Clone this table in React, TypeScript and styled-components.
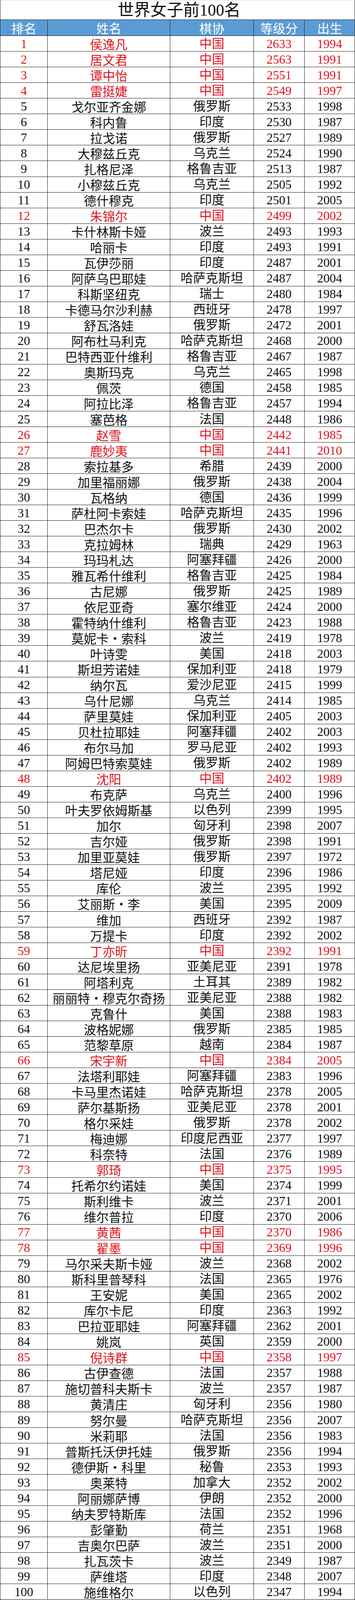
import React from 'react'
import styled, { createGlobalStyle } from 'styled-components'

const GlobalStyle = createGlobalStyle`
  html, body {
    margin: 0;
    padding: 0;
    background: #ffffff;
  }
  body {
    font-family: 'Liberation Serif', 'Noto Sans CJK SC', serif;
  }
`

type Player = [string, string, number, number]

const players: Player[] = [
  ['侯逸凡', '中国', 2633, 1994],
  ['居文君', '中国', 2563, 1991],
  ['谭中怡', '中国', 2551, 1991],
  ['雷挺婕', '中国', 2549, 1997],
  ['戈尔亚齐金娜', '俄罗斯', 2533, 1998],
  ['科内鲁', '印度', 2530, 1987],
  ['拉戈诺', '俄罗斯', 2527, 1989],
  ['大穆兹丘克', '乌克兰', 2524, 1990],
  ['扎格尼泽', '格鲁吉亚', 2513, 1987],
  ['小穆兹丘克', '乌克兰', 2505, 1992],
  ['德什穆克', '印度', 2501, 2005],
  ['朱锦尔', '中国', 2499, 2002],
  ['卡什林斯卡娅', '波兰', 2493, 1993],
  ['哈丽卡', '印度', 2493, 1991],
  ['瓦伊莎丽', '印度', 2487, 2001],
  ['阿萨乌巴耶娃', '哈萨克斯坦', 2487, 2004],
  ['科斯坚纽克', '瑞士', 2480, 1984],
  ['卡德马尔沙利赫', '西班牙', 2478, 1997],
  ['舒瓦洛娃', '俄罗斯', 2472, 2001],
  ['阿布杜马利克', '哈萨克斯坦', 2468, 2000],
  ['巴特西亚什维利', '格鲁吉亚', 2467, 1987],
  ['奥斯玛克', '乌克兰', 2465, 1998],
  ['佩茨', '德国', 2458, 1985],
  ['阿拉比泽', '格鲁吉亚', 2457, 1994],
  ['塞芭格', '法国', 2448, 1986],
  ['赵雪', '中国', 2442, 1985],
  ['鹿妙夷', '中国', 2441, 2010],
  ['索拉基多', '希腊', 2439, 2000],
  ['加里福丽娜', '俄罗斯', 2438, 2004],
  ['瓦格纳', '德国', 2436, 1999],
  ['萨杜阿卡索娃', '哈萨克斯坦', 2435, 1996],
  ['巴杰尔卡', '俄罗斯', 2430, 2002],
  ['克拉姆林', '瑞典', 2429, 1963],
  ['玛玛札达', '阿塞拜疆', 2426, 2000],
  ['雅瓦希什维利', '格鲁吉亚', 2425, 1984],
  ['古尼娜', '俄罗斯', 2425, 1989],
  ['依尼亚奇', '塞尔维亚', 2424, 2000],
  ['霍特纳什维利', '格鲁吉亚', 2423, 1988],
  ['莫妮卡·索科', '波兰', 2419, 1978],
  ['叶诗雯', '美国', 2418, 2003],
  ['斯坦芳诺娃', '保加利亚', 2418, 1979],
  ['纳尔瓦', '爱沙尼亚', 2415, 1999],
  ['乌什尼娜', '乌克兰', 2414, 1985],
  ['萨里莫娃', '保加利亚', 2405, 2003],
  ['贝杜拉耶娃', '阿塞拜疆', 2402, 2003],
  ['布尔马加', '罗马尼亚', 2402, 1993],
  ['阿姆巴特索莫娃', '俄罗斯', 2402, 1989],
  ['沈阳', '中国', 2402, 1989],
  ['布克萨', '乌克兰', 2400, 1996],
  ['叶夫罗依姆斯基', '以色列', 2399, 1995],
  ['加尔', '匈牙利', 2398, 2007],
  ['吉尔娅', '俄罗斯', 2398, 1991],
  ['加里亚莫娃', '俄罗斯', 2397, 1972],
  ['塔尼娅', '印度', 2396, 1986],
  ['库伦', '波兰', 2395, 1992],
  ['艾丽斯·李', '美国', 2395, 2009],
  ['维加', '西班牙', 2392, 1987],
  ['万提卡', '印度', 2392, 2002],
  ['丁亦昕', '中国', 2392, 1991],
  ['达尼埃里扬', '亚美尼亚', 2391, 1978],
  ['阿塔利克', '土耳其', 2389, 1982],
  ['丽丽特·穆克尔奇扬', '亚美尼亚', 2388, 1982],
  ['克鲁什', '美国', 2388, 1983],
  ['波格妮娜', '俄罗斯', 2385, 1985],
  ['范黎草原', '越南', 2384, 1987],
  ['宋宇新', '中国', 2384, 2005],
  ['法塔利耶娃', '阿塞拜疆', 2383, 1996],
  ['卡马里杰诺娃', '哈萨克斯坦', 2378, 2005],
  ['萨尔基斯扬', '亚美尼亚', 2378, 2001],
  ['格尔采娃', '俄罗斯', 2378, 2002],
  ['梅迪娜', '印度尼西亚', 2377, 1997],
  ['科奈特', '法国', 2376, 1989],
  ['郭琦', '中国', 2375, 1995],
  ['托希尔约诺娃', '美国', 2374, 1999],
  ['斯利维卡', '波兰', 2371, 2001],
  ['维尔普拉', '印度', 2370, 2006],
  ['黄茜', '中国', 2370, 1986],
  ['翟墨', '中国', 2369, 1996],
  ['马尔采夫斯卡娅', '波兰', 2368, 2002],
  ['斯科里普琴科', '法国', 2365, 1976],
  ['王安妮', '美国', 2365, 2002],
  ['库尔卡尼', '印度', 2363, 1992],
  ['巴拉亚耶娃', '阿塞拜疆', 2362, 2001],
  ['姚岚', '英国', 2359, 2000],
  ['倪诗群', '中国', 2358, 1997],
  ['古伊查德', '法国', 2357, 1988],
  ['施切普科夫斯卡', '波兰', 2357, 1987],
  ['黄清庄', '匈牙利', 2356, 1980],
  ['努尔曼', '哈萨克斯坦', 2356, 2007],
  ['米莉耶', '法国', 2356, 1983],
  ['普斯托沃伊托娃', '俄罗斯', 2356, 1994],
  ['德伊斯·科里', '秘鲁', 2353, 1993],
  ['奥莱特', '加拿大', 2352, 2002],
  ['阿丽娜萨博', '伊朗', 2352, 2000],
  ['纳夫罗特斯库', '法国', 2352, 1996],
  ['彭肇勤', '荷兰', 2351, 1968],
  ['吉奥尔巴萨', '波兰', 2351, 2000],
  ['扎瓦茨卡', '波兰', 2349, 1987],
  ['萨维塔', '印度', 2348, 2007],
  ['施维格尔', '以色列', 2347, 1994],
]

function App() {
  return (
    <>
      <GlobalStyle />
      <Sheet>
        <Title>世界女子前100名</Title>
        <HeadRow>
          <HeadCell>排名</HeadCell>
          <HeadCell>姓名</HeadCell>
          <HeadCell>棋协</HeadCell>
          <HeadCell>等级分</HeadCell>
          <HeadCell>出生</HeadCell>
        </HeadRow>
        {players.map(([name, fed, rating, born], i) => {
          const red = fed === '中国'
          return (
            <Row key={i}>
              <Cell $red={red}>{i + 1}</Cell>
              <NameCell $red={red}>{name}</NameCell>
              <Cell $red={red}>{fed}</Cell>
              <Cell $red={red}>{rating}</Cell>
              <Cell $red={red}>{born}</Cell>
            </Row>
          )
        })}
      </Sheet>
    </>
  )
}

export default App

// the sheet fills the window; title, header and rows share it as 53 : 43 : 42 x 100
const Sheet = styled.div`
  width: 909px;
  height: 100vh;
  box-sizing: border-box;
  display: flex;
  flex-direction: column;
  border-left: 1px solid #1c1c1c;
  border-right: 1px solid #1c1c1c;
  border-top: 1px solid #d6d6d6;
  background: #ffffff;
`

const Title = styled.div`
  flex: 53 1 0;
  min-height: 0;
  box-sizing: border-box;
  border-bottom: 1px solid #1c1c1c;
  display: flex;
  justify-content: center;
  align-items: center;
  font-size: 42px;
  line-height: 1;
  color: #111111;
  padding-left: 8px;
`

const columns = '121px 314px 214px 130px 1fr'

const HeadRow = styled.div`
  flex: 43 1 0;
  min-height: 0;
  display: grid;
  grid-template-columns: ${columns};
  background: #5b9bd5;
  box-sizing: border-box;
  border-bottom: 1px solid #1c1c1c;
`

const HeadCell = styled.div`
  display: flex;
  justify-content: center;
  align-items: center;
  color: #ffffff;
  font-family: 'Noto Sans CJK SC', sans-serif;
  font-size: 32px;
  line-height: 1;
  border-right: 1px solid #1c1c1c;
  &:last-child {
    border-right: none;
  }
`

const Row = styled.div`
  flex: 42 1 0;
  min-height: 0;
  display: grid;
  grid-template-columns: ${columns};
  box-sizing: border-box;
  border-bottom: 1px solid #1c1c1c;
`

const Cell = styled.div<{ $red?: boolean }>`
  display: flex;
  justify-content: center;
  align-items: center;
  min-height: 0;
  font-size: 32px;
  line-height: 1;
  white-space: nowrap;
  color: ${p => (p.$red ? '#e0141e' : '#111111')};
  border-right: 1px solid #1c1c1c;
  &:last-child {
    border-right: none;
  }
`

const NameCell = styled(Cell)`
  font-family: 'Noto Sans CJK SC', sans-serif;
  font-feature-settings: 'fwid';
`
